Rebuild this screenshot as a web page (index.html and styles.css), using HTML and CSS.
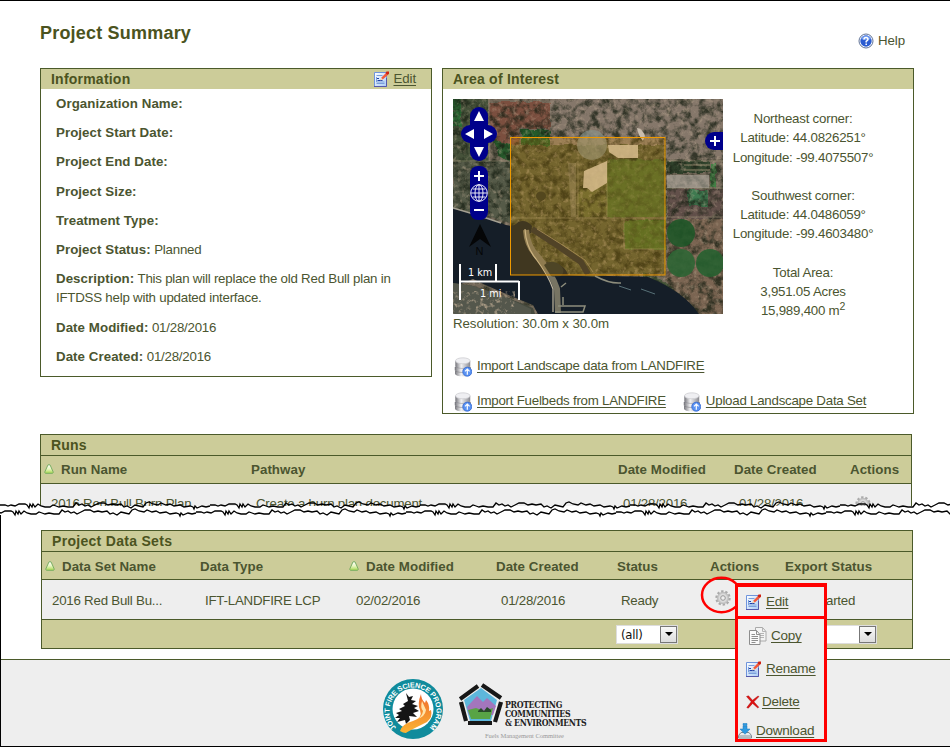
FILE: index.html
```html
<!DOCTYPE html>
<html lang="en">
<head>
<meta charset="utf-8">
<title>Project Summary</title>
<link rel="stylesheet" href="styles.css">
</head>
<body>
<svg class="defs" width="0" height="0" aria-hidden="true">
  <defs>
    <linearGradient id="docg" x1="0" y1="0" x2="1" y2="1"><stop offset="0" stop-color="#fff"/><stop offset="1" stop-color="#a9cbf5"/></linearGradient>
    <linearGradient id="dbg" x1="0" x2="1"><stop offset="0" stop-color="#77777d"/><stop offset=".4" stop-color="#f2f2f4"/><stop offset="1" stop-color="#8c8c92"/></linearGradient>
    <linearGradient id="trig" x1="0" y1="0" x2="0" y2="1"><stop offset="0" stop-color="#fff"/><stop offset=".5" stop-color="#e8f5c0"/><stop offset="1" stop-color="#a5d84e"/></linearGradient>
    <linearGradient id="flame" x1="0" y1="0" x2="0" y2="1"><stop offset="0" stop-color="#ef6a2c"/><stop offset="1" stop-color="#fbb534"/></linearGradient>
    <symbol id="edit" viewBox="0 0 16 16">
      <path d="M1.500 1.500h12v14h-12z" fill="url(#docg)" stroke="#6f94dc"/>
      <path d="M1 15.500h12.500V7" fill="none" stroke="#5458ab"/>
      <path d="M3.500 4.500h6M3.500 12.500h8M3.500 6v5h8" fill="none" stroke="#7aa0dc"/>
      <path d="M4 7.500h2M4.500 9.500h5" stroke="#1c3fa8"/>
      <path d="M7.500 9.300 8.500 6.500 12.700 2.200 14.800 4 10 8.300z" fill="#f2583a"/>
      <path d="M7.300 9.500 8.300 6.800 10 8.400z" fill="#f7d8b0"/>
      <path d="M12.500 2.300 13.500.4H16v2.400l-1.300 1.300z" fill="#cf2111"/>
    </symbol>
    <symbol id="db" viewBox="0 0 18 20">
      <path d="M1 14v2.500c0 3.800 15.500 3.800 15.500 0V14z" fill="url(#dbg)"/>
      <path d="M1 10v3c0 3.300 15.500 3.300 15.500 0v-3z" fill="url(#dbg)" stroke="#77777d" stroke-width=".5"/>
      <path d="M1.500 4v5c0 3.300 14.500 3.300 14.500 0V4z" fill="url(#dbg)" stroke="#8b8b91" stroke-width=".5"/>
      <ellipse cx="8.800" cy="3.800" rx="7.300" ry="3" fill="#efeff2" stroke="#c8c8cd" stroke-width=".7"/>
      <circle cx="13.300" cy="14.700" r="4.500" fill="#5b93f2" stroke="#2f66d3" stroke-width=".8"/>
      <path d="M13.300 17.700v-5.500M11 14.300l2.300-2.300 2.300 2.300" fill="none" stroke="#fff" stroke-width="1.200"/>
    </symbol>
    <symbol id="gear" viewBox="0 0 16 16">
      <circle cx="8" cy="8" r="6.700" fill="none" stroke="#aaa" stroke-width="2" stroke-dasharray="2.400 1.810"/>
      <circle cx="8" cy="8" r="5.700" fill="#c9c9c9" stroke="#aaa" stroke-width=".6"/>
      <circle cx="8" cy="8" r="4.200" fill="#dcdcdc"/>
      <circle cx="8" cy="8" r="2.300" fill="#eee" stroke="#999"/>
    </symbol>
    <symbol id="tri" viewBox="0 0 10 10">
      <path d="M4 .8h2L9.300 8.200 8.600 9.300H1.400L.7 8.200z" fill="url(#trig)" stroke="#79ad62" stroke-linejoin="round"/>
    </symbol>
    <symbol id="copy" viewBox="0 0 18 18">
      <path d="M6.500.5h7l3.500 4V14H6.500z" fill="#f3f3f3" stroke="#aaa"/><path d="M13.500.5V4.500H17M11 6.500h4M11 8.500h4M11 10.500h4" fill="none" stroke="#b5b5b5"/>
      <path d="M.5 3.500h7l3.500 4v10H.5z" fill="#fafafa" stroke="#8d8d8d"/>
      <path d="M7.500 3.500v4H11M2.500 7.500h3.500M2.500 9.500h6.500M2.500 11.500h6.500M2.500 13.500h6.500M2.500 15.500h4" fill="none" stroke="#8f8f8f"/>
    </symbol>
    <symbol id="delete" viewBox="0 0 14 14">
      <path d="M.5 1.500 2.500.8 6.500 5.200 12 1l1 .6L7.900 6.800l4.900 5.400-1 .8-5.200-4.600L2.300 13.200.8 12.500 5.200 6.800z" fill="#e01212" stroke="#a00000" stroke-width=".4"/>
    </symbol>
    <symbol id="download" viewBox="0 0 14 16">
      <path d="M3 9.500h8l2.500 3V15h-13v-2.500z" fill="#e8ecef" stroke="#7b8892"/>
      <path d="M1 13h12" stroke="#86939c"/>
      <path d="M5 .5h4v2H5zM5 3h4v3h3l-5 5.300L2 6h3z" fill="#2e9ae0" stroke="#1b78bd" stroke-width=".5"/>
    </symbol>
  </defs>
</svg>

<div class="page">
  <section class="upper">
    <header class="title-bar">
      <h1>Project Summary</h1>
      <a class="help"><svg width="16" height="16" viewBox="0 0 16 16"><circle cx="8" cy="8" r="7" fill="#fff" stroke="#5f7297" stroke-width="1"/><circle cx="8" cy="8" r="5.700" fill="#2a5bd0"/><path d="M3 6a5.300 5.300 0 0 1 10 0q-5 2-10 0" fill="#6d98ee"/><path d="M6 6.500Q6 4.500 8 4.500t2 1.800Q10 7.300 8.200 8.300V9.400M8.200 10.500v1.500" fill="none" stroke="#fff" stroke-width="1.500"/></svg><span>Help</span></a>
    </header>

    <div class="panels">
      <section class="panel info">
        <div class="band"><h2>Information</h2><a class="band-link"><svg width="16" height="16"><use href="#edit"/></svg><u>Edit</u></a></div>
        <div class="fields">
          <p><b>Organization Name:</b></p>
          <p><b>Project Start Date:</b></p>
          <p><b>Project End Date:</b></p>
          <p><b>Project Size:</b></p>
          <p><b>Treatment Type:</b></p>
          <p><b>Project Status:</b> Planned</p>
          <p><b>Description:</b> This plan will replace the old Red Bull plan in<br>IFTDSS help with updated interface.</p>
          <p><b>Date Modified:</b> 01/28/2016</p>
          <p><b>Date Created:</b> 01/28/2016</p>
        </div>
      </section>

      <section class="panel aoi">
        <div class="band"><h2>Area of Interest</h2></div>
        <div class="aoi-body">
          <div class="map-col">
            <svg class="map" width="270" height="215" viewBox="0 0 270 215">
              <defs>
                <filter id="grain" x="0" y="0" width="100%" height="100%" color-interpolation-filters="sRGB"><feTurbulence type="fractalNoise" baseFrequency=".13" numOctaves="5" seed="8"/><feColorMatrix values="0 0 0 0 .1  0 0 0 0 .13  0 0 0 0 .08  2.600 1.200 0 0 -1.600"/></filter>
                <filter id="light" x="0" y="0" width="100%" height="100%" color-interpolation-filters="sRGB"><feTurbulence type="fractalNoise" baseFrequency=".22" numOctaves="4" seed="21"/><feColorMatrix values="0 0 0 0 .78  0 0 0 0 .7  0 0 0 0 .6  0 3 1 0 -2.050"/></filter>
                <filter id="rough" color-interpolation-filters="sRGB"><feTurbulence type="fractalNoise" baseFrequency=".09" numOctaves="3" seed="4"/><feDisplacementMap in="SourceGraphic" scale="5" xChannelSelector="R" yChannelSelector="G"/></filter>
              </defs>
              <rect width="270" height="215" fill="#74695a"/>
              <g filter="url(#rough)">
                <path d="M-5-5H36V62H-5z" fill="#46523a"/>
                <path d="M0 0h8v28H0z" fill="#2c6b35"/>
                <path d="M37 3h60v27H66v22H48L38 38z" fill="#7b4f3f"/>
                <path d="M97-5H275V60H97z" fill="#85776a"/>
                <path d="M68 31h29v16H68z" fill="#235a2a"/>
                <path d="M39 40 57 45v17L45 55z" fill="#27592b"/>
                <path d="M0 62h57v62L0 108z" fill="#555a48"/>
                <path d="M57 46H213V175H57z" fill="#56583a"/>
                <path d="M154 60h58v58h-58z" fill="#456330"/>
                <path d="M125 90l29-22v50h-29z" fill="#5c6339"/>
                <path d="M171 121h41v29h-41z" fill="#3a6428"/>
                <path d="M214 62h42v12h-42z" fill="#32442d"/>
                <path d="M214 90h56v30h-56z" fill="#62504a"/>
                <path d="M235 91h20v16h-20zM242 120h15v14h-15z" fill="#3f7a50"/>
                <path d="M257 65h6v23h-6z" fill="#437f45"/>
                <path d="M212 180 220 120h50v95h-35z" fill="#7b6552"/>
                <path d="M190 174q28 8 56 41h-20l-36-30z" fill="#405135"/>
              </g>
              <rect width="270" height="215" filter="url(#grain)" opacity=".75"/>
              <rect width="270" height="215" filter="url(#light)" opacity=".38"/>
              <path d="M154 66q8-4 18-4h40v56h-58zM172 122h40v28h-40z" fill="#4c6a30" opacity=".55"/>
              <path d="M0 62H57M213 62h57M213 89h57M213 118h57M36 0v62M125 62v56M154 62v56M57 119H213M171 120v30h42" fill="none" stroke="#aaa083" stroke-opacity=".45"/>
              <path d="M115 64h8v54h-5z" fill="#a79f8a" opacity=".35"/>
              <path d="M131 72l23-10v22l-15 9-5-4h-4zM155 46h30v13h-20l-9-6z" fill="#d2c5b0" opacity=".85"/>
              <path d="M184 29q5 0 8 8l-2 5q-5-6-6-13z" fill="#c9bdae"/>
              <path d="M214 76h42v13h-42z" fill="#b3aca2" opacity=".6"/>
              <circle cx="139" cy="46" r="15" fill="#8b938b" opacity=".65"/>
              <circle cx="228" cy="134" r="14" fill="#1f5728" opacity=".9"/><circle cx="228" cy="164" r="14" fill="#2d6534" opacity=".9"/><circle cx="257" cy="164" r="14" fill="#276130" opacity=".9"/>
              <path d="M231 66h26M231 71h26" stroke="#b49c82" stroke-opacity=".7"/>
              <ellipse cx="88" cy="97" rx="5" ry="4.500" fill="#2c3226"/>
              <path d="M0 109Q25 116 48 124 60 130 65 123 73 120 79 127L78 134 73 137Q74 148 86 159 95 166 103 164q10 4 12 12L195 178Q230 192 246 215H85L80 206Q40 190 20 180L0 188z" fill="#151e28"/>
              <path d="M0 109Q25 116 48 124" fill="none" stroke="#a4a092" stroke-width="1.500"/>
              <path d="M115 176q8-2 22-1 26-4 54 2l-20-3-30 4z" fill="#54563a" opacity=".7"/>
              <path d="M73 131Q74 148 86 159 99 175 104 190L105 214" fill="none" stroke="#777463" stroke-width="6"/>
              <path d="M72 130Q73 148 83 160 95 176 100 190V213" fill="none" stroke="#c3b9a1" stroke-width="1.200"/>
              <path d="M79 130 105 147 128 163 135 175" fill="none" stroke="#2a2d31" stroke-width="6"/>
              <path d="M84 130 108 145 132 161 140 173" fill="none" stroke="#998d70" stroke-width=".8"/>
              <path d="M91 166q6-6 15-1 8 6 2 12-6 1-10 0z" fill="#263030"/>
              <path d="M142 177q15 8 26 7M108 188l5-4M105 207h27l-2 6h-28M110 198v8" fill="none" stroke="#8d8d7c" stroke-width="1.500"/>
              <path d="M166 187l12 4M188 190l14 5" stroke="#577077"/>
              <path d="M0 184 20 187 50 197 80 209 82 215H0z" fill="#454a3e"/>
              <svg y="182" width="84" height="33"><path d="M0 2 20 5 50 15 78 28v5H0z" fill="#54574c"/><rect y="10" width="62" height="23" filter="url(#light)" opacity=".8"/></svg>
              <rect x="57.500" y="38.500" width="154.500" height="137.500" fill="#ee9900" fill-opacity=".2" stroke="#ee9900"/>
              <g fill="#00008b"><rect x="17" y="8" width="18" height="54" rx="9"/><rect x="8" y="26" width="36" height="18" rx="9"/><rect x="17" y="67" width="18" height="54" rx="8"/><path d="M270 33h-9a9 9 0 0 0 0 18h9z"/></g>
              <path d="M26 12l5 10H21zM26 58l-5-10h10zM12 35l9-5v10zM40 35l-9-5v10z" fill="#fff"/>
              <path d="M21 77h10M26 72v10M21 111h10M257 42h10M262 37v10" stroke="#fff" stroke-width="2"/>
              <g fill="none" stroke="#fff" stroke-width=".9"><circle cx="26" cy="94" r="8.300"/><ellipse cx="26" cy="94" rx="4" ry="8.300"/><path d="M26 86v16M18 94h16M19.500 90h13M19.500 98h13"/></g>
              <path d="M27 125 38 148 27 140 16 148z" fill="#050607"/>
              <text x="22.500" y="156" class="north">N</text>
              <path d="M7 165v36M43 165v17M6 182.500h60M66 182v19" fill="none" stroke="#fff" stroke-width="2"/>
              <text x="15" y="177" class="scale">1 km</text><text x="27" y="198" class="scale">1 mi</text>
            </svg>
            <div class="resolution">Resolution: 30.0m x 30.0m</div>
          </div>
          <div class="coords">
            <div>Northeast corner:<br>Latitude: 44.0826251°<br>Longitude: -99.4075507°</div>
            <div>Southwest corner:<br>Latitude: 44.0486059°<br>Longitude: -99.4603480°</div>
            <div>Total Area:<br>3,951.05 Acres<br>15,989,400 m<sup>2</sup></div>
          </div>
        </div>
        <div class="imports">
          <a><svg width="18" height="20"><use href="#db"/></svg><u>Import Landscape data from LANDFIRE</u></a>
          <div class="import-row">
            <a><svg width="18" height="20"><use href="#db"/></svg><u>Import Fuelbeds from LANDFIRE</u></a>
            <a><svg width="18" height="20"><use href="#db"/></svg><u>Upload Landscape Data Set</u></a>
          </div>
        </div>
      </section>
    </div>

    <section class="table runs">
      <h2 class="caption">Runs</h2>
      <div class="row head"><span class="sorted"><svg width="10" height="10"><use href="#tri"/></svg>Run Name</span><span>Pathway</span><span>Date Modified</span><span>Date Created</span><span>Actions</span></div>
      <div class="row data"><span>2016 Red Bull Burn Plan</span><span>Create a burn plan document</span><span>01/28/2016</span><span>01/28/2016</span><span><svg width="16" height="16"><use href="#gear"/></svg></span></div>
    </section>
  </section>

  <svg class="tear" width="950" height="20" viewBox="0 0 950 20">
    <defs>
      <path id="edge" d="M0 7h5l3 1 3-1 4 1 4-2h6l2 1 2 3 1-4 2 3 1-3 2 3 3-3 3 2 4 1h5l3-2 3 1 3 1 4-1 5 1h5l3-4 3 2 3-1 3 2 3-1 3 2 4-2 4-2h5l4 2 4-1 4 1 5-1 3 3 3-1 4 2 4-3 4 1 4 1 3-4 3-1 4 2 5 1 3-2 5 2 4-1 4 2 6-1 4 2 6-1 3 1 1 2 1-3 2 2 5-2 4 1 4-1"/>
    </defs>
    <path d="M0 8h950v9H0z" fill="#fff"/>
    <g fill="none" stroke="#000" stroke-width="1.300">
      <use href="#edge"/><use href="#edge" x="210"/><use href="#edge" x="420"/><use href="#edge" x="630"/><use href="#edge" x="840"/>
      <use href="#edge" x="-14" y="7"/><use href="#edge" x="196" y="7"/><use href="#edge" x="406" y="7"/><use href="#edge" x="616" y="7"/><use href="#edge" x="826" y="7"/>
    </g>
  </svg>

  <section class="lower">
    <section class="table sets">
      <h2 class="caption">Project Data Sets</h2>
      <div class="row head"><span class="sorted"><svg width="10" height="10"><use href="#tri"/></svg>Data Set Name</span><span>Data Type</span><span class="sorted"><svg width="10" height="10"><use href="#tri"/></svg>Date Modified</span><span>Date Created</span><span>Status</span><span>Actions</span><span>Export Status</span></div>
      <div class="row data"><span>2016 Red Bull Bu...</span><span>IFT-LANDFIRE LCP</span><span>02/02/2016</span><span>01/28/2016</span><span>Ready</span><span class="gear"><svg width="16" height="16"><use href="#gear"/></svg></span><span class="export">arted</span></div>
      <div class="row filters"><span class="select status-filter"><span>(all)</span><i></i></span><span class="select export-filter"><i></i></span></div>
    </section>

    <footer>
      <svg class="jfsp" width="60" height="60" viewBox="0 0 60 60">
        <defs><path id="arc" d="M13.200 48.500A23.500 23.500 0 1 1 46.800 48.500"/></defs>
        <circle cx="30" cy="30" r="30" fill="#108b9c"/><circle cx="30" cy="30" r="20.500" fill="#fff"/>
        <path d="M23 14l3 4 4-1-2 4 5 1-4 3 6 2-4 2 5 3-6 2 4 4-8-1 1 4-4 4-1-4-8 2 3-4-5 0 4-3-3-2 6-2-3-2 6-3-2-2 5-3z" fill="#151515"/>
        <path d="M17 52q2-7 13-10 10-3 7-11-3-6 1-16 0 5 4 9l1-3q4 5 3 11l2-1q2 7-4 12-6 3-12 6-8 4-9 5-3 0-6-2z" fill="url(#flame)"/>
        <path d="M39 22q-2 7 1 10-1 6-6 8 8-2 9-9z" fill="#ffe3a8"/>
        <text class="ring"><textPath href="#arc" textLength="110">JOINT FIRE SCIENCE PROGRAM</textPath></text>
      </svg>
      <div class="pce">
        <svg width="44" height="44" viewBox="0 0 44 44">
          <path d="M22 5 38 17 32 38H11L5 17z" fill="#5db7dc"/>
          <path d="M8 24 18 13 24 19 28 15 37 23 34 32H10z" fill="#a376bd"/>
          <path d="M9 27l8-2 8 3 9-3-3 11H12z" fill="#58a445"/><path d="M19 28l3-3 3 3 3-4 4 3v2H19z" fill="#284b28"/>
          <path d="M1 16 19 3M23 2 42 15M42 19 36 39M33 40H9M7 38 2 19" fill="none" stroke="#171717" stroke-width="4.200"/>
        </svg>
        <div class="pce-text"><strong>PROTECTING<br>COMMUNITIES<br>&amp; ENVIRONMENTS</strong></div>
        <small>Fuels Management Committee</small>
      </div>
    </footer>
  </section>

  <svg class="ring-mark" width="44" height="40" viewBox="0 0 44 40"><ellipse cx="21.500" cy="19" rx="19.500" ry="17.200" fill="none" stroke="#f00" stroke-width="2.500"/></svg>
  <nav class="menu">
    <a class="first"><svg width="16" height="16"><use href="#edit"/></svg><u>Edit</u></a>
    <a class="copy"><svg width="18" height="18"><use href="#copy"/></svg><u>Copy</u></a>
    <a class="rename"><svg width="16" height="16"><use href="#edit"/></svg><u>Rename</u></a>
    <a class="delete"><svg width="14" height="14"><use href="#delete"/></svg><u>Delete</u></a>
    <a class="download"><svg width="14" height="16"><use href="#download"/></svg><u>Download</u></a>
  </nav>
</div>
</body>
</html>
```
FILE: styles.css
```css
* { box-sizing: border-box; }
body { margin: 0; background: #fff; color: #4b5530; font: 13.3px/19.3px "Liberation Sans", Arial, sans-serif; letter-spacing: -.23px; }
h1, h2, p { margin: 0; }
svg { display: block; flex: none; }
.defs { position: absolute; }
b, .head { font-weight: bold; letter-spacing: .06px; }
u { text-underline-offset: 2px; text-decoration-thickness: 1px; }
.page { position: relative; width: 950px; height: 748px; overflow: hidden; }

.upper { height: 510px; border-top: 1px solid #000; overflow: hidden; }
.title-bar { display: flex; justify-content: space-between; height: 67px; padding: 20px 45px 0 40px; }
h1 { font-size: 18px; line-height: 24px; letter-spacing: .2px; color: #4b5320; }
.help { display: flex; gap: 4px; height: 39px; align-items: center; letter-spacing: -.1px; }
h2 { font-size: 14px; line-height: 20px; letter-spacing: .22px; color: #4b5320; }

.panels { display: flex; align-items: flex-start; gap: 10px; padding-left: 40px; }
.panel { border: 1px solid #4b5a2a; }
.info { width: 392px; height: 309px; }
.aoi { width: 472px; height: 346px; }
.band { display: flex; justify-content: space-between; height: 20px; padding: 0 15px 0 10px; background: #cccc99; }
.band-link { display: flex; gap: 4px; align-items: center; letter-spacing: -.1px; }
.fields { padding: 5px 0 0 15px; }
.fields p { margin-bottom: 9.900px; }
.aoi-body { display: flex; padding: 10px 0 0 10px; }
.map-col { width: 270px; }
.resolution { letter-spacing: -.09px; }
.coords { display: flex; flex-direction: column; gap: 19px; width: 160px; padding-top: 10px; text-align: center; }
sup { font-size: 10.500px; line-height: 0; vertical-align: 5px; }
.imports { padding: 23px 0 0 11px; }
.imports a { display: flex; gap: 5px; height: 20px; letter-spacing: -.24px; }
.imports svg { margin-top: 1px; }
.import-row { display: flex; gap: 17px; margin-top: 15px; }

.table { width: 872px; border: 1px solid #4b5a2a; }
.caption { height: 21px; padding-left: 10px; background: #cccc99; border-bottom: 1px solid #4b5a2a; }
.row { display: grid; align-items: center; }
.row.head { height: 28px; background: #cccc99; border-bottom: 1px solid #4b5a2a; }
.row.data { background: #eee; }
.sorted { display: flex; align-items: center; gap: 7px; }
.runs { margin: 20px 0 0 40px; }
.runs .row { grid-template-columns: 207px 367px 116px 116px 60px; padding-left: 3px; }
.runs .data { height: 39px; }
.runs .data > span:first-child { padding-left: 7px; }
.runs .data > span:nth-child(n+2) { padding-left: 5px; }

.tear { position: absolute; left: 0; top: 498px; }

.lower { display: flow-root; height: 237px; border-left: 1px solid #000; border-bottom: 1px solid #000; }
.sets { margin: 20px 0 0 40px; }
.sets .caption { line-height: 21px; letter-spacing: .3px; }
.sets .head { padding-top: 2px; }
.sets .row { grid-template-columns: 155px 149px 147px 121px 93px 75px 120px; padding-left: 3px; }
.sets .data { height: 40px; padding-top: 2px; border-bottom: 1px solid #4b5a2a; }
.sets .data > span { padding-left: 5px; }
.sets .data > span:first-child { padding-left: 7px; }
.sets .data > span:nth-child(3) { padding-left: 7px; }
.sets .data > span:nth-child(5) { padding-left: 4px; }
.sets .data > .gear { padding-bottom: 6px; }
.sets .data > .export { padding-left: 41px; }
.sets .filters { display: flex; height: 28px; padding-left: 574px; background: #cccc99; }
.select { display: flex; height: 19px; background: #fff; border: 1px solid #ddd; color: #111; justify-content: space-between; padding-left: 4px; font: 13px/18px "DejaVu Sans Condensed", "DejaVu Sans", sans-serif; }
.status-filter { width: 62px; }
.export-filter { width: 90px; margin-left: 109px; }
.select i { display: flex; align-items: center; justify-content: center; width: 17px; margin: 0 0 0 auto; border: 1px solid #777; background: linear-gradient(#f8f8f8, #ddd); }
.select i::after { content: ""; border: 4px solid transparent; border-top-color: #000; border-bottom: 0; }

footer { display: flex; height: 87px; margin-top: 10px; padding: 19px 0 0 382px; background: #eee; border-top: 1px solid #4b5a2a; }
.ring { font: bold 7.200px "Liberation Sans", sans-serif; letter-spacing: 0; fill: #fff; }
.pce { display: grid; grid-template-columns: 46px 90px; grid-template-rows: 48px 14px; margin: 4px 0 0 16px; }
.pce-text { padding-top: 18px; font: bold 8.700px/8.800px "DejaVu Serif Condensed", "Liberation Serif", serif; color: #222; white-space: nowrap; letter-spacing: -.35px; }
.pce small { grid-column: 1 / 3; padding-left: 26px; font: 6.500px/10px "Liberation Serif", serif; letter-spacing: -.05px; color: #999; white-space: nowrap; }

.scale { font: 9.700px "DejaVu Sans", sans-serif; letter-spacing: 0; fill: #fff; }
.north { font: 11px "Liberation Sans", sans-serif; fill: #050607; }

.ring-mark { position: absolute; left: 700px; top: 576px; }
.menu { position: absolute; left: 735px; top: 583px; width: 92px; height: 159px; border: 3px solid #f00; border-top-width: 4px; background: #eee; font-size: 13.500px; }
.menu a { display: flex; align-items: center; }
.menu .first { height: 32px; gap: 5px; padding-left: 7px; border-bottom: 3px solid #f00; }
.menu .copy { height: 34px; gap: 4px; padding-left: 11px; }
.menu .rename { height: 32px; gap: 5px; padding-left: 7px; }
.menu .delete { height: 34px; gap: 2px; padding-left: 8px; }
.menu .download { height: 23px; gap: 4px; }
```
